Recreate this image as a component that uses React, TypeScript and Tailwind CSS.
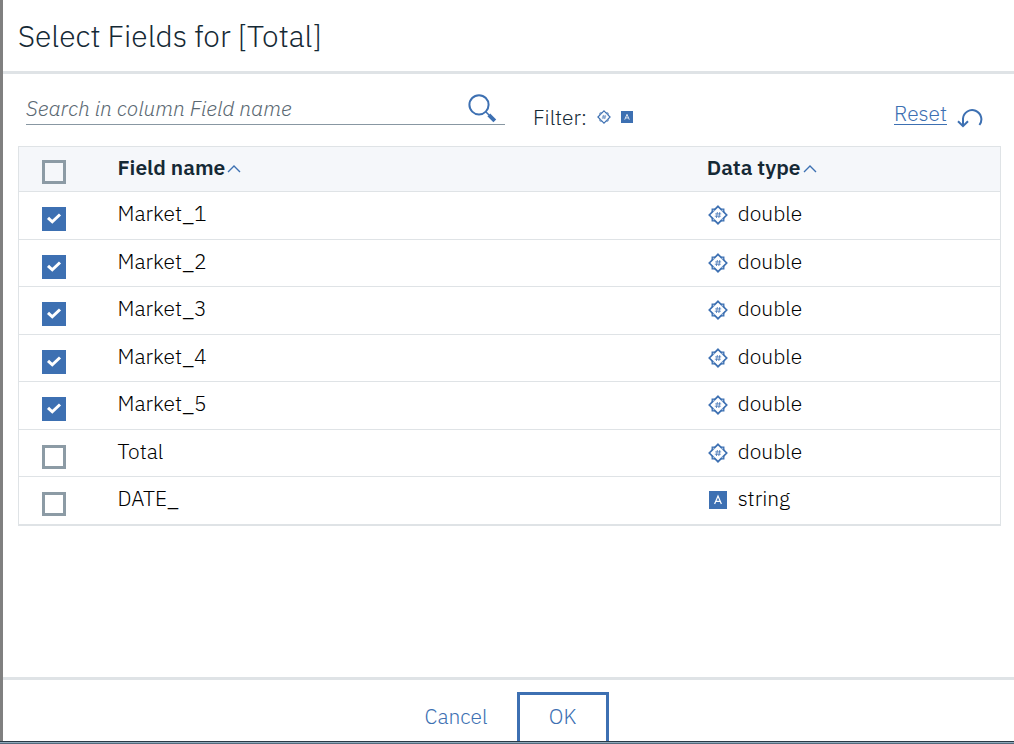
import { useState } from "react";

type DataType = "double" | "string";

interface Field {
  name: string;
  type: DataType;
  selected: boolean;
}

const initialFields: Field[] = [
  { name: "Market_1", type: "double", selected: true },
  { name: "Market_2", type: "double", selected: true },
  { name: "Market_3", type: "double", selected: true },
  { name: "Market_4", type: "double", selected: true },
  { name: "Market_5", type: "double", selected: true },
  { name: "Total", type: "double", selected: false },
  { name: "DATE_", type: "string", selected: false },
];

function DoubleIcon({ className }: { className: string }) {
  return (
    <svg viewBox="0 0 20 20" className={className} fill="none" stroke="#3d70b2" aria-hidden="true">
      <path d="M10 1.300 18.700 10 10 18.700 1.300 10Z" strokeWidth="1.7" />
      <path
        d="M4.200 7V4.200H7M15.800 7V4.200H13M4.200 13v2.800H7M15.800 13v2.800H13"
        strokeWidth="1.3"
      />
      <path d="M5.300 5.300h1v1h-1zM13.700 5.300h1v1h-1zM5.300 13.700h1v1h-1zM13.700 13.700h1v1h-1z" fill="#fff" stroke="none" />
      <path d="M9.400 7 8.400 13M11.800 7l-1 6M7.200 8.900h6M6.800 11.200h6" strokeWidth="0.8" />
    </svg>
  );
}

function StringIcon({ className }: { className: string }) {
  return (
    <svg viewBox="0 0 18 18" className={className} fill="none" aria-hidden="true">
      <path d="M0 0h18v18H0z" fill="#3d70b2" />
      <path d="M5.600 13 9 5l3.400 8M6.800 10.400h4.400" stroke="#fff" strokeWidth="1.2" />
    </svg>
  );
}

function SearchIcon() {
  return (
    <svg viewBox="0 0 30 30" className="size-[30px]" fill="none" stroke="#3d70b2" aria-hidden="true">
      <circle cx="12" cy="11.8" r="9.6" strokeWidth="2" />
      <path d="m19 19 3 3" strokeWidth="1.6" />
      <path d="m21.8 21.800 6 6" strokeWidth="4" />
    </svg>
  );
}

function ResetIcon() {
  return (
    <svg viewBox="0 0 26 20" className="h-5 w-[26px]" fill="none" stroke="#3d70b2" strokeWidth="2" aria-hidden="true">
      <path d="M6 18V10.500A9.200 9.200 0 1 1 22.400 17" />
      <path d="m1 13.200 5 5 5-5" />
    </svg>
  );
}

function Caret() {
  return (
    <svg viewBox="0 0 14 8" className="ml-0.5 mb-0.5 inline-block h-2 w-3.5" fill="none" stroke="#3d70b2" strokeWidth="1.4" aria-hidden="true">
      <path d="m1 7 6-6 6 6" />
    </svg>
  );
}

function Checkbox({ label, checked, onChange }: { label: string; checked: boolean; onChange: (v: boolean) => void }) {
  return (
    <span className="relative block size-6">
      <input
        type="checkbox"
        aria-label={label}
        checked={checked}
        onChange={(e) => onChange(e.target.checked)}
        className="peer block size-6 appearance-none border-3 border-[#8c9ba5] checked:border-[#3d70b2] checked:bg-[#3d70b2]"
      />
      <svg
        viewBox="0 0 24 24"
        className="pointer-events-none absolute inset-0 hidden size-6 peer-checked:block"
        fill="none"
        stroke="#fff"
        strokeWidth="3"
        aria-hidden="true"
      >
        <path d="m6 10.800 4.300 4L18 7.500" />
      </svg>
    </span>
  );
}

export default function App() {
  const [fields, setFields] = useState(initialFields);
  const [query, setQuery] = useState("");

  const visible = fields.filter((f) => f.name.toLowerCase().includes(query.toLowerCase()));
  const allSelected = fields.every((f) => f.selected);
  const setOne = (name: string, selected: boolean) =>
    setFields((list) => list.map((f) => (f.name === name ? { ...f, selected } : f)));
  const setAll = (selected: boolean) => setFields((list) => list.map((f) => ({ ...f, selected })));
  const reset = () => {
    setFields(initialFields);
    setQuery("");
  };

  return (
    <div className="flex h-screen flex-col bg-white font-['IBM_Plex_Sans',Roboto,sans-serif] text-[21px] leading-7 font-light text-[#152935]">
      <div className="flex min-h-0 flex-1 flex-col overflow-hidden border-l-3 border-[#808080]">
        <header className="border-b-3 border-[#dfe3e6] px-[15px] pt-4 pb-[15px]">
          <h1 className="text-[30px] leading-10">Select Fields for [Total]</h1>
        </header>

        <main className="flex-1 pr-[13px] pl-[15px]">
          <div className="flex h-[72px] items-start">
            <label className="mt-4 ml-2 flex h-[35px] w-[479px] items-start border-b border-[#8897a2]">
              <input
                type="text"
                aria-label="Search in column Field name"
                placeholder="Search in column Field name"
                value={query}
                onChange={(e) => setQuery(e.target.value)}
                className="h-9 min-w-0 flex-1 outline-none placeholder:text-[#5a6872] placeholder:italic"
              />
              <span className="mt-[3px] mr-2">
                <SearchIcon />
              </span>
            </label>
            <div className="mt-[29px] ml-7 flex items-center">
              <span className="mr-2.5">Filter:</span>
              <button type="button" aria-label="Filter double fields">
                <DoubleIcon className="size-3.5" />
              </button>
              <button type="button" aria-label="Filter string fields" className="ml-2.5">
                <StringIcon className="size-3" />
              </button>
            </div>
            <button type="button" onClick={reset} className="mt-[25px] mr-[18px] ml-auto flex text-[#3d70b2]">
              <span className="h-[26px] border-b border-[#3d70b2]">Reset</span>
              <span className="mt-[9px] ml-2.5">
                <ResetIcon />
              </span>
            </button>
          </div>

          <table className="w-full table-fixed border-collapse border border-b-2 border-[#dfe3e6] text-left">
            <colgroup>
              <col className="w-[99px]" />
              <col className="w-[60%]" />
              <col />
            </colgroup>
            <thead>
              <tr className="h-[45px] bg-[#f5f7fa] align-top">
                <th className="pt-[13px] pl-[23px]">
                  <Checkbox label="Select all fields" checked={allSelected} onChange={setAll} />
                </th>
                <th className="pt-1.5 font-semibold">
                  Field name
                  <Caret />
                </th>
                <th className="pt-1.5 font-semibold">
                  Data type
                  <Caret />
                </th>
              </tr>
            </thead>
            <tbody className="text-black">
              {visible.map((f) => (
                <tr key={f.name} className="h-[47px] border-t border-[#dfe3e6] align-top odd:h-12">
                  <td className="pt-[15px] pl-[23px]">
                    <Checkbox label={`Select ${f.name}`} checked={f.selected} onChange={(v) => setOne(f.name, v)} />
                  </td>
                  <td className="pt-[7px]">{f.name}</td>
                  <td className="pt-[7px]">
                    <span className="flex items-center">
                      <span className="mr-2.5 flex w-[21px] justify-end pt-1">
                        {f.type === "double" ? (
                          <DoubleIcon className="size-5" />
                        ) : (
                          <StringIcon className="mr-px size-[18px]" />
                        )}
                      </span>
                      {f.type}
                    </span>
                  </td>
                </tr>
              ))}
            </tbody>
          </table>
        </main>

        <footer className="flex h-16 items-start justify-center overflow-hidden border-t-3 border-[#dfe3e6] pl-4 text-[#3d70b2]">
          <button type="button" className="mt-3 mr-[29px] h-[49px] pb-0.5">
            Cancel
          </button>
          <button type="button" className="mt-3 h-[49px] w-[92px] border-3 border-b-0 border-[#3d70b2] pb-1">
            OK
          </button>
        </footer>
      </div>
      <div className="h-[3px] border-t border-b border-t-[#2b3a46] border-b-[#526a7c] bg-[#8fa9bb]" />
    </div>
  );
}
